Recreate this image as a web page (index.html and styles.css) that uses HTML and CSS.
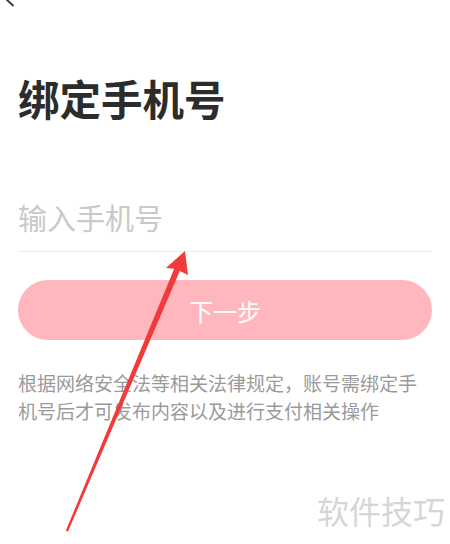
FILE: index.html
```html
<!DOCTYPE html>
<html lang="zh-CN">
<head>
<meta charset="utf-8">
<title>绑定手机号</title>
<link rel="stylesheet" href="styles.css">
</head>
<body>
<div class="page">
  <header class="topbar">
    <svg class="back" width="20" height="8" viewBox="0 0 20 8" aria-hidden="true">
      <polyline points="6,-1 13,5.5" fill="none" stroke="#333" stroke-width="1.8" stroke-linecap="round"/>
    </svg>
  </header>
  <main class="content">
    <h1 class="title">绑定手机号</h1>
    <div class="phone-field">输入手机号</div>
    <div class="next-btn">下一步</div>
    <p class="notice">根据网络安全法等相关法律规定，账号需绑定手机号后才可发布内容以及进行支付相关操作</p>
  </main>
  <div class="watermark">软件技巧</div>
  <svg class="arrow" width="450" height="544" viewBox="0 0 450 544" aria-hidden="true">
    <polygon points="185,251 188,275 179.8,271 68,531.5 65.8,530.8 174.2,268.8 166,268" fill="#f23a3a"/>
  </svg>
</div>
</body>
</html>
```
FILE: styles.css
```css
html, body {
  margin: 0;
  padding: 0;
  background: #ffffff;
}
body {
  font-family: "Noto Sans CJK SC", "Noto Sans", sans-serif;
  width: 450px;
  height: 544px;
  overflow: hidden;
}
.page {
  position: relative;
  width: 450px;
  height: 544px;
}
.topbar {
  height: 8px;
}
.back {
  display: block;
}
.content {
  padding: 0 18px;
}
.title {
  margin: 66px 0 0;
  font-size: 41.5px;
  line-height: 48px;
  font-weight: 700;
  color: #2c2c2c;
}
.phone-field {
  margin-top: 75px;
  padding-bottom: 14px;
  font-size: 29px;
  line-height: 40px;
  color: #c9c9c9;
  border-bottom: 1px solid #eeeeee;
}
.next-btn {
  margin-top: 28px;
  height: 60px;
  border-radius: 30px;
  background: #ffb6bc;
  color: #ffffff;
  font-size: 24px;
  display: flex;
  align-items: center;
  justify-content: center;
}
.notice {
  margin: 29px 0 0;
  font-size: 19px;
  line-height: 27.5px;
  color: #9a9a9a;
}
.watermark {
  position: absolute;
  right: 5px;
  top: 489px;
  font-size: 32px;
  line-height: 42px;
  color: #d6d6d6;
}
.arrow {
  position: absolute;
  left: 0;
  top: 0;
}
```
